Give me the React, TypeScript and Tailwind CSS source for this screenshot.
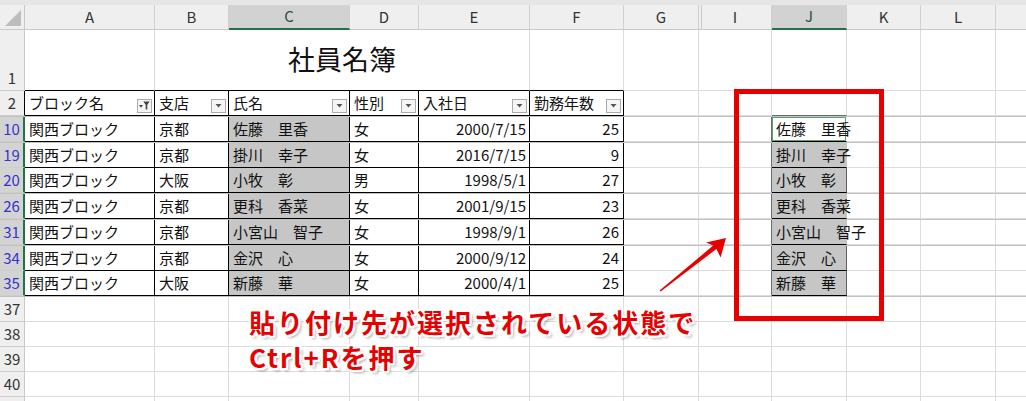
import React from 'react';

const FONT = "font-['Noto_Sans_CJK_JP','Noto_Sans',sans-serif]";

type Col = { k: string; w: string };
const COLS: Col[] = [
  { k: 'A', w: 'w-[130px]' },
  { k: 'B', w: 'w-[74px]' },
  { k: 'C', w: 'w-[121px]' },
  { k: 'D', w: 'w-[69px]' },
  { k: 'E', w: 'w-[111px]' },
  { k: 'F', w: 'w-[94px]' },
  { k: 'G', w: 'w-[75px]' },
  { k: 'I', w: 'w-[73px]' },
  { k: 'J', w: 'w-[75px]' },
  { k: 'K', w: 'w-[74px]' },
  { k: 'L', w: 'w-[75px]' },
  { k: '', w: 'w-[40px]' },
];
const RIGHT_COLS = COLS.slice(6);

type Rec = { n: number; a: string; b: string; c: string; d: string; e: string; f: string; sep: boolean };
const DATA: Rec[] = [
  { n: 10, a: '関西ブロック', b: '京都', c: '佐藤　里香', d: '女', e: '2000/7/15', f: '25', sep: true },
  { n: 19, a: '関西ブロック', b: '京都', c: '掛川　幸子', d: '女', e: '2016/7/15', f: '9', sep: false },
  { n: 20, a: '関西ブロック', b: '大阪', c: '小牧　彰', d: '男', e: '1998/5/1', f: '27', sep: true },
  { n: 26, a: '関西ブロック', b: '京都', c: '更科　香菜', d: '女', e: '2001/9/15', f: '23', sep: true },
  { n: 31, a: '関西ブロック', b: '京都', c: '小宮山　智子', d: '女', e: '1998/9/1', f: '26', sep: true },
  { n: 34, a: '関西ブロック', b: '京都', c: '金沢　心', d: '女', e: '2000/9/12', f: '24', sep: false },
  { n: 35, a: '関西ブロック', b: '大阪', c: '新藤　華', d: '女', e: '2000/4/1', f: '25', sep: true },
];

const GRID_CELL = 'shrink-0 border-r border-b border-[#dcdcdc]';
const TBL_CELL = 'shrink-0 border-r border-b border-black flex items-center px-[4px] whitespace-nowrap';

function RowHead({ n, selected, tableEdge, tall }: { n?: number; selected?: boolean; tableEdge?: boolean; tall?: boolean }) {
  const base = 'w-[25px] shrink-0 flex justify-center text-[15px] border-b border-b-[#cdcdcd]';
  const align = tall ? 'items-end pb-[1px]' : 'items-center';
  const look = selected
    ? 'bg-[#d3d3d3] text-[#3333cc] border-r-2 border-r-[#217346]'
    : tableEdge
    ? 'bg-[#efefef] text-[#333] border-r border-r-black'
    : 'bg-[#efefef] text-[#333] border-r border-r-[#c9c9c9]';
  return <div className={`${base} ${align} ${look}`}>{n}</div>;
}

function FilterBtn({ active }: { active?: boolean }) {
  return (
    <div className="w-[15px] h-[14px] mt-[5px] border border-[#ababab] bg-[#f5f5f5] flex items-center justify-center shrink-0">
      {active ? (
        <svg width="11" height="9" viewBox="0 0 11 9">
          <path d="M0 4 L4 4 L2 6.8 Z" fill="#444" />
          <path d="M4.3 0.5 L10.7 0.5 L8.3 3.8 L8.3 8.5 L6.7 8.5 L6.7 3.8 Z" fill="#444" />
        </svg>
      ) : (
        <svg width="7" height="4" viewBox="0 0 7 4">
          <path d="M0.5 0 L6.5 0 L3.5 3.5 Z" fill="#555" />
        </svg>
      )}
    </div>
  );
}

function HeadCell({ w, label, active }: { w: string; label: string; active?: boolean }) {
  return (
    <div className={`${w} ${TBL_CELL} justify-between pr-[2px]`}>
      <span>{label}</span>
      <FilterBtn active={active} />
    </div>
  );
}

function RightGrid({ row }: { row?: Rec | 'hdr' }) {
  return (
    <>
      {RIGHT_COLS.map((c) => {
        if (c.k === 'I') {
          const dark = row && row !== 'hdr';
          return (
            <div
              key={c.k}
              className={`${c.w} shrink-0 border-b border-b-[#dcdcdc] border-r ${dark ? 'border-r-[#6b6b6b]' : 'border-r-[#dcdcdc]'}`}
            />
          );
        }
        if (c.k === 'J' && row === 'hdr') {
          return <div key={c.k} className={`${c.w} shrink-0 border-r border-r-[#dcdcdc] border-b border-b-[#6b6b6b]`} />;
        }
        if (c.k === 'J' && row) {
          const r = row as Rec;
          const overflow = [...r.c].length >= 5;
          const first = r.n === 10;
          return (
            <div
              key={c.k}
              className={`${c.w} shrink-0 border-b border-b-black border-r ${overflow ? 'border-r-transparent' : 'border-r-[#5f5f5f]'} ${
                first ? 'bg-white shadow-[inset_0_0_0_1px_#5aa073]' : 'bg-[#c6c6c6]'
              } flex items-center pl-[4px] whitespace-nowrap overflow-visible`}
            >
              <span className="relative">{r.c}</span>
            </div>
          );
        }
        return <div key={c.k} className={`${c.w} ${GRID_CELL}`} />;
      })}
    </>
  );
}

function Sep() {
  return <div className="h-px w-full bg-[#c2c2c2]" />;
}

export default function App() {
  return (
    <div className={`relative w-[1026px] h-[401px] overflow-hidden bg-white text-[#111] ${FONT}`}>
      <div className="h-[5px] bg-[#e6e6e6]" />

      {/* column headers */}
      <div className="flex h-[25px] bg-[#efefef]">
        <div className="w-[25px] shrink-0 border-r border-b border-[#c9c9c9] flex">
          <svg width="24" height="24" viewBox="0 0 24 24">
            <path d="M5 21 L21 21 L21 5 Z" fill="#bdbdbd" />
          </svg>
        </div>
        {COLS.map((c) => {
          const sel = c.k === 'C' || c.k === 'J';
          return (
            <div
              key={c.k || 'm'}
              className={`${c.w} shrink-0 flex items-center justify-center text-[15px] border-r border-r-[#d0d0d0] ${
                sel ? 'bg-[#d2d2d2] border-b-2 border-b-[#217346] text-[#2b4f3a]' : 'border-b border-b-[#c9c9c9] text-[#333]'
              } ${c.k === 'I' ? 'shadow-[inset_2px_0_0_#efefef,inset_3px_0_0_#c9c9c9]' : ''}`}
            >
              {c.k}
            </div>
          );
        })}
      </div>

      {/* row 1 */}
      <div className="flex h-[61px]">
        <RowHead n={1} tall />
        <div className="w-[130px] shrink-0 border-r border-r-[#dcdcdc] border-b border-b-black" />
        <div className="w-[375px] shrink-0 border-r border-r-[#dcdcdc] border-b border-b-black flex items-center justify-center text-[27px] pb-[2px] text-[#111]">
          社員名簿
        </div>
        <div className="w-[94px] shrink-0 border-r border-r-[#dcdcdc] border-b border-b-black" />
        <RightGrid />
      </div>

      {/* row 2 - table header */}
      <div className="flex h-[25px] text-[15px]">
        <RowHead n={2} tableEdge />
        <HeadCell w="w-[130px]" label="ブロック名" active />
        <HeadCell w="w-[74px]" label="支店" />
        <HeadCell w="w-[121px]" label="氏名" />
        <HeadCell w="w-[69px]" label="性別" />
        <HeadCell w="w-[111px]" label="入社日" />
        <HeadCell w="w-[94px]" label="勤務年数" />
        <RightGrid row="hdr" />
      </div>
      <Sep />

      {DATA.map((r) => (
        <React.Fragment key={r.n}>
          <div className="flex h-[25px] text-[15px]">
            <RowHead n={r.n} selected />
            <div className={`w-[130px] ${TBL_CELL}`}>{r.a}</div>
            <div className={`w-[74px] ${TBL_CELL}`}>{r.b}</div>
            <div className={`w-[121px] ${TBL_CELL} bg-[#c6c6c6]`}>{r.c}</div>
            <div className={`w-[69px] ${TBL_CELL}`}>{r.d}</div>
            <div className={`w-[111px] ${TBL_CELL} justify-end pr-[3px]`}>{r.e}</div>
            <div className={`w-[94px] ${TBL_CELL} justify-end`}>{r.f}</div>
            <RightGrid row={r} />
          </div>
          {r.sep && <Sep />}
        </React.Fragment>
      ))}

      {[37, 38, 39, 40, 0].map((n) => (
        <div key={n} className="flex h-[25px] text-[15px]">
          <RowHead n={n || undefined} />
          {COLS.map((c) => (
            <div key={c.k || 'm'} className={`${c.w} ${GRID_CELL}`} />
          ))}
        </div>
      ))}

      {/* red selection frame */}
      <div className="absolute left-[734px] top-[89px] w-[150px] h-[232px] border-[5px] border-[#e60000]" />

      {/* arrow */}
      <svg className="absolute left-0 top-0 pointer-events-none" width="1026" height="401" viewBox="0 0 1026 401">
        <polygon
          points="726,238 706,242.6 713.2,245.6 659.6,290.4 660.6,291.6 716.4,249 720.6,257.4"
          fill="#e60000"
        />
      </svg>

      {/* annotation */}
      <div className="absolute left-[249px] top-[304px] text-[26px] leading-[35px] tracking-[2px] font-bold text-[#e60000] whitespace-nowrap [text-shadow:-2px_-2px_0_#fff,2px_-2px_0_#fff,-2px_2px_0_#fff,2px_2px_0_#fff,0_-2px_0_#fff,0_2px_0_#fff,-2px_0_0_#fff,2px_0_0_#fff,3px_3px_3px_rgba(0,0,0,0.35)]">
        <div>貼り付け先が選択されている状態で</div>
        <div>Ctrl+Rを押す</div>
      </div>
    </div>
  );
}
